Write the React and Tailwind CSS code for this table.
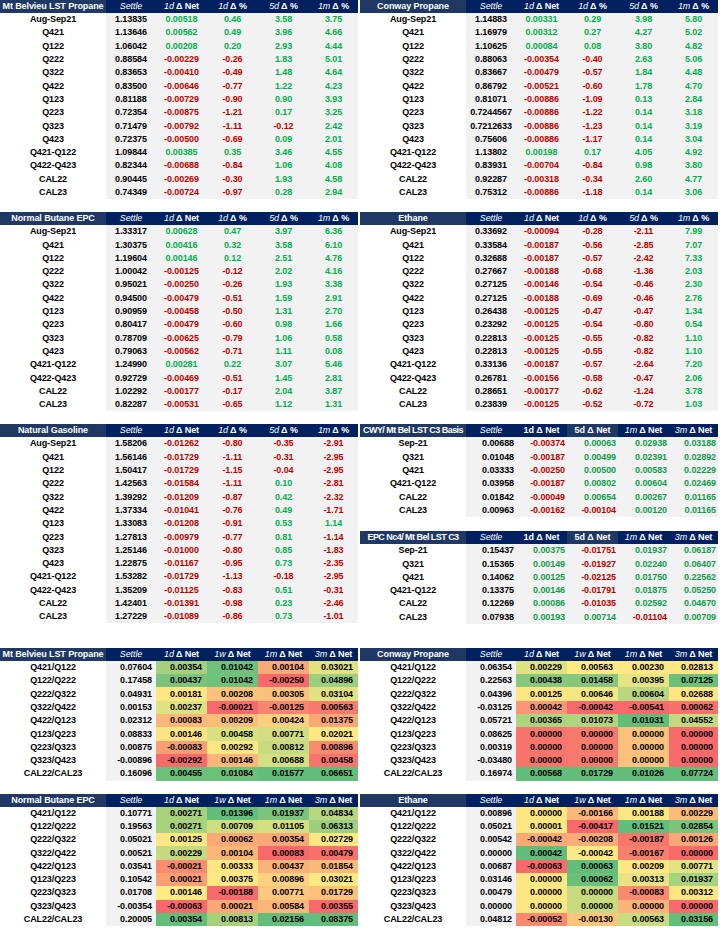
import React from "react";

const COLS = ["w-[106px]", "w-[50px]", "w-[51px]", "w-[51px]", "w-[51px]", "w-[49px]"];

const TOP_HEAD = [["Settle", ""], ["1d", " Δ Net"], ["1d", " Δ %"], ["5d", " Δ %"], ["1m", " Δ %"]];
const BASIS_HEAD = [["Settle", ""], ["", "1d Δ Net"], ["", "5d Δ Net"], ["1m", " Δ Net"], ["3m", " Δ Net"]];
const SPREAD_HEAD = [["Settle", ""], ["1d", " Δ Net"], ["1w", " Δ Net"], ["1m", " Δ Net"], ["3m", " Δ Net"]];

const r = (s) => s.split(" ");

const belvieu = [
  "Aug-Sep21 1.13835 0.00518 0.46 3.58 3.75",
  "Q421 1.13646 0.00562 0.49 3.96 4.66",
  "Q122 1.06042 0.00208 0.20 2.93 4.44",
  "Q222 0.88584 -0.00229 -0.26 1.83 5.01",
  "Q322 0.83653 -0.00410 -0.49 1.48 4.64",
  "Q422 0.83500 -0.00646 -0.77 1.22 4.23",
  "Q123 0.81188 -0.00729 -0.90 0.90 3.93",
  "Q223 0.72354 -0.00875 -1.21 0.17 3.25",
  "Q323 0.71479 -0.00792 -1.11 -0.12 2.42",
  "Q423 0.72375 -0.00500 -0.69 0.09 2.01",
  "Q421-Q122 1.09844 0.00385 0.35 3.46 4.55",
  "Q422-Q423 0.82344 -0.00688 -0.84 1.06 4.08",
  "CAL22 0.90445 -0.00269 -0.30 1.93 4.58",
  "CAL23 0.74349 -0.00724 -0.97 0.28 2.94",
].map(r);

const conway = [
  "Aug-Sep21 1.14883 0.00331 0.29 3.98 5.80",
  "Q421 1.16979 0.00312 0.27 4.27 5.02",
  "Q122 1.10625 0.00084 0.08 3.80 4.82",
  "Q222 0.88063 -0.00354 -0.40 2.63 5.06",
  "Q322 0.83667 -0.00479 -0.57 1.84 4.48",
  "Q422 0.86792 -0.00521 -0.60 1.78 4.70",
  "Q123 0.81071 -0.00886 -1.09 0.13 2.84",
  "Q223 0.7244567 -0.00886 -1.22 0.14 3.18",
  "Q323 0.7212633 -0.00886 -1.23 0.14 3.19",
  "Q423 0.75606 -0.00886 -1.17 0.14 3.04",
  "Q421-Q122 1.13802 0.00198 0.17 4.05 4.92",
  "Q422-Q423 0.83931 -0.00704 -0.84 0.98 3.80",
  "CAL22 0.92287 -0.00318 -0.34 2.60 4.77",
  "CAL23 0.75312 -0.00886 -1.18 0.14 3.06",
].map(r);

const butane = [
  "Aug-Sep21 1.33317 0.00628 0.47 3.97 6.36",
  "Q421 1.30375 0.00416 0.32 3.58 6.10",
  "Q122 1.19604 0.00146 0.12 2.51 4.76",
  "Q222 1.00042 -0.00125 -0.12 2.02 4.16",
  "Q322 0.95021 -0.00250 -0.26 1.93 3.38",
  "Q422 0.94500 -0.00479 -0.51 1.59 2.91",
  "Q123 0.90959 -0.00458 -0.50 1.31 2.70",
  "Q223 0.80417 -0.00479 -0.60 0.98 1.66",
  "Q323 0.78709 -0.00625 -0.79 1.06 0.58",
  "Q423 0.79063 -0.00562 -0.71 1.11 0.08",
  "Q421-Q122 1.24990 0.00281 0.22 3.07 5.46",
  "Q422-Q423 0.92729 -0.00469 -0.51 1.45 2.81",
  "CAL22 1.02292 -0.00177 -0.17 2.04 3.87",
  "CAL23 0.82287 -0.00531 -0.65 1.12 1.31",
].map(r);

const ethane = [
  "Aug-Sep21 0.33692 -0.00094 -0.28 -2.11 7.99",
  "Q421 0.33584 -0.00187 -0.56 -2.85 7.07",
  "Q122 0.32688 -0.00187 -0.57 -2.42 7.33",
  "Q222 0.27667 -0.00188 -0.68 -1.36 2.03",
  "Q322 0.27125 -0.00146 -0.54 -0.46 2.30",
  "Q422 0.27125 -0.00188 -0.69 -0.46 2.76",
  "Q123 0.26438 -0.00125 -0.47 -0.47 1.34",
  "Q223 0.23292 -0.00125 -0.54 -0.80 0.54",
  "Q323 0.22813 -0.00125 -0.55 -0.82 1.10",
  "Q423 0.22813 -0.00125 -0.55 -0.82 1.10",
  "Q421-Q122 0.33136 -0.00187 -0.57 -2.64 7.20",
  "Q422-Q423 0.26781 -0.00156 -0.58 -0.47 2.06",
  "CAL22 0.28651 -0.00177 -0.62 -1.24 3.78",
  "CAL23 0.23839 -0.00125 -0.52 -0.72 1.03",
].map(r);

const gasoline = [
  "Aug-Sep21 1.58206 -0.01262 -0.80 -0.35 -2.91",
  "Q421 1.56146 -0.01729 -1.11 -0.31 -2.95",
  "Q122 1.50417 -0.01729 -1.15 -0.04 -2.95",
  "Q222 1.42563 -0.01584 -1.11 0.10 -2.81",
  "Q322 1.39292 -0.01209 -0.87 0.42 -2.32",
  "Q422 1.37334 -0.01041 -0.76 0.49 -1.71",
  "Q123 1.33083 -0.01208 -0.91 0.53 1.14",
  "Q223 1.27813 -0.00979 -0.77 0.81 -1.14",
  "Q323 1.25146 -0.01000 -0.80 0.85 -1.83",
  "Q423 1.22875 -0.01167 -0.95 0.73 -2.35",
  "Q421-Q122 1.53282 -0.01729 -1.13 -0.18 -2.95",
  "Q422-Q423 1.35209 -0.01125 -0.83 0.51 -0.31",
  "CAL22 1.42401 -0.01391 -0.98 0.23 -2.46",
  "CAL23 1.27229 -0.01089 -0.86 0.73 -1.01",
].map(r);

const cwyBasis = [
  "Sep-21 0.00688 -0.00374 0.00063 0.02938 0.03188",
  "Q321 0.01048 -0.00187 0.00499 0.02391 0.02892",
  "Q421 0.03333 -0.00250 0.00500 0.00583 0.02229",
  "Q421-Q122 0.03958 -0.00187 0.00802 0.00604 0.02469",
  "CAL22 0.01842 -0.00049 0.00654 0.00267 0.01165",
  "CAL23 0.00963 -0.00162 -0.00104 0.00120 0.01165",
].map(r);

const epcBasis = [
  "Sep-21 0.15437 0.00375 -0.01751 0.01937 0.06187",
  "Q321 0.15365 0.00149 -0.01927 0.02240 0.06407",
  "Q421 0.14062 0.00125 -0.02125 0.01750 0.22562",
  "Q421-Q122 0.13375 0.00146 -0.01791 0.01875 0.05250",
  "CAL22 0.12269 0.00086 -0.01035 0.02592 0.04670",
  "CAL23 0.07938 0.00193 0.00714 -0.01104 0.00709",
].map(r);

// spread rows: label, settle, then [value, bg class] x4
const belvieuSpread = [
  ["Q421/Q122", "0.07604", ["0.00354", "bg-[#a5d17f]"], ["0.01042", "bg-[#6fc17c]"], ["0.00104", "bg-[#fbaa77]"], ["0.03021", "bg-[#e2e283]"]],
  ["Q122/Q222", "0.17458", ["0.00437", "bg-[#7cc47d]"], ["0.01042", "bg-[#6fc17c]"], ["-0.00250", "bg-[#f8696b]"], ["0.04896", "bg-[#9ecf7f]"]],
  ["Q222/Q322", "0.04931", ["0.00181", "bg-[#fee683]"], ["0.00208", "bg-[#fcc27c]"], ["0.00305", "bg-[#fcc17c]"], ["0.03104", "bg-[#e0e283]"]],
  ["Q322/Q422", "0.00153", ["0.00237", "bg-[#dce182]"], ["-0.00021", "bg-[#f8696b]"], ["-0.00125", "bg-[#f98570]"], ["0.00563", "bg-[#f87a6e]"]],
  ["Q422/Q123", "0.02312", ["0.00083", "bg-[#fbb779]"], ["0.00209", "bg-[#fcbf7b]"], ["0.00424", "bg-[#fdcf7e]"], ["0.01375", "bg-[#fba877]"]],
  ["Q123/Q223", "0.08833", ["0.00146", "bg-[#fee382]"], ["0.00458", "bg-[#d9e082]"], ["0.00771", "bg-[#d2de81]"], ["0.02021", "bg-[#fee883]"]],
  ["Q223/Q323", "0.00875", ["-0.00083", "bg-[#f99d74]"], ["0.00292", "bg-[#fee783]"], ["0.00812", "bg-[#c9db80]"], ["0.00896", "bg-[#f98a70]"]],
  ["Q323/Q423", "-0.00896", ["-0.00292", "bg-[#f8696b]"], ["0.00146", "bg-[#fcb679]"], ["0.00688", "bg-[#d4df81]"], ["0.00458", "bg-[#f8756d]"]],
  ["CAL22/CAL23", "0.16096", ["0.00455", "bg-[#6bc07b]"], ["0.01084", "bg-[#6bc07b]"], ["0.01577", "bg-[#63be7b]"], ["0.06651", "bg-[#63be7b]"]],
];

const conwaySpread = [
  ["Q421/Q122", "0.06354", ["0.00229", "bg-[#dfe283]"], ["0.00563", "bg-[#ffea84]"], ["0.00230", "bg-[#fee883]"], ["0.02813", "bg-[#fee783]"]],
  ["Q122/Q222", "0.22563", ["0.00438", "bg-[#8ac77e]"], ["0.01458", "bg-[#87c67e]"], ["0.00395", "bg-[#e5e383]"], ["0.07125", "bg-[#6bc07b]"]],
  ["Q222/Q322", "0.04396", ["0.00125", "bg-[#fee783]"], ["0.00646", "bg-[#f1e783]"], ["0.00604", "bg-[#b9d780]"], ["0.02688", "bg-[#fee582]"]],
  ["Q322/Q422", "-0.03125", ["0.00042", "bg-[#f99677]"], ["-0.00042", "bg-[#f8696b]"], ["-0.00541", "bg-[#f8696b]"], ["0.00062", "bg-[#f8716c]"]],
  ["Q422/Q123", "0.05721", ["0.00365", "bg-[#add380]"], ["0.01073", "bg-[#b0d480]"], ["0.01031", "bg-[#63be7b]"], ["0.04552", "bg-[#c5da80]"]],
  ["Q123/Q223", "0.08625", ["0.00000", "bg-[#f8756d]"], ["0.00000", "bg-[#f87a6e]"], ["0.00000", "bg-[#fcc27c]"], ["0.00000", "bg-[#f8696b]"]],
  ["Q223/Q323", "0.00319", ["0.00000", "bg-[#f8756d]"], ["0.00000", "bg-[#f87a6e]"], ["0.00000", "bg-[#fcc27c]"], ["0.00000", "bg-[#f8696b]"]],
  ["Q323/Q423", "-0.03480", ["0.00000", "bg-[#f8756d]"], ["0.00000", "bg-[#f87a6e]"], ["0.00000", "bg-[#fcc27c]"], ["0.00000", "bg-[#f8696b]"]],
  ["CAL22/CAL23", "0.16974", ["0.00568", "bg-[#63be7b]"], ["0.01729", "bg-[#63be7b]"], ["0.01026", "bg-[#63be7b]"], ["0.07724", "bg-[#63be7b]"]],
];

const butaneSpread = [
  ["Q421/Q122", "0.10771", ["0.00271", "bg-[#a9d27f]"], ["0.01396", "bg-[#63be7b]"], ["0.01937", "bg-[#7cc47d]"], ["0.04834", "bg-[#b9d780]"]],
  ["Q122/Q222", "0.19563", ["0.00271", "bg-[#a9d27f]"], ["0.00709", "bg-[#cfdd82]"], ["0.01105", "bg-[#d4df82]"], ["0.06313", "bg-[#9ecf7f]"]],
  ["Q222/Q322", "0.05021", ["0.00125", "bg-[#fee683]"], ["0.00062", "bg-[#fbaa77]"], ["0.00354", "bg-[#fba777]"], ["0.02729", "bg-[#fee883]"]],
  ["Q322/Q422", "0.00521", ["0.00229", "bg-[#c5da80]"], ["0.00104", "bg-[#fbb579]"], ["0.00083", "bg-[#f8696b]"], ["0.00479", "bg-[#f8716c]"]],
  ["Q422/Q123", "0.03541", ["-0.00021", "bg-[#f98b70]"], ["0.00333", "bg-[#fee683]"], ["0.00437", "bg-[#fbb279]"], ["0.01854", "bg-[#fcba7a]"]],
  ["Q123/Q223", "0.10542", ["0.00021", "bg-[#fa9e74]"], ["0.00375", "bg-[#fee883]"], ["0.00896", "bg-[#fdd17f]"], ["0.03021", "bg-[#fde983]"]],
  ["Q223/Q323", "0.01708", ["0.00146", "bg-[#ffeb84]"], ["-0.00188", "bg-[#f8696b]"], ["0.00771", "bg-[#fdc77d]"], ["0.01729", "bg-[#fcc27c]"]],
  ["Q323/Q423", "-0.00354", ["-0.00063", "bg-[#f8696b]"], ["0.00021", "bg-[#fba777]"], ["0.00584", "bg-[#fcb67a]"], ["0.00355", "bg-[#f8696b]"]],
  ["CAL22/CAL23", "0.20005", ["0.00354", "bg-[#63be7b]"], ["0.00813", "bg-[#a5d17f]"], ["0.02156", "bg-[#63be7b]"], ["0.08375", "bg-[#63be7b]"]],
];

const ethaneSpread = [
  ["Q421/Q122", "0.00896", ["0.00000", "bg-[#fee683]"], ["-0.00166", "bg-[#fcb87a]"], ["0.00188", "bg-[#fee683]"], ["0.00229", "bg-[#fcbb7a]"]],
  ["Q122/Q222", "0.05021", ["0.00001", "bg-[#fee683]"], ["-0.00417", "bg-[#f8696b]"], ["0.01521", "bg-[#63be7b]"], ["0.02854", "bg-[#7cc47d]"]],
  ["Q222/Q322", "0.00542", ["-0.00042", "bg-[#fbaa77]"], ["-0.00208", "bg-[#fbad78]"], ["-0.00187", "bg-[#f8776d]"], ["0.00126", "bg-[#fba777]"]],
  ["Q322/Q422", "0.00000", ["0.00042", "bg-[#63be7b]"], ["-0.00042", "bg-[#fee883]"], ["-0.00167", "bg-[#f87e6e]"], ["0.00000", "bg-[#f8696b]"]],
  ["Q422/Q123", "0.00687", ["-0.00063", "bg-[#f8696b]"], ["0.00063", "bg-[#63be7b]"], ["0.00209", "bg-[#fee683]"], ["0.00771", "bg-[#e2e383]"]],
  ["Q123/Q223", "0.03146", ["0.00000", "bg-[#fee683]"], ["0.00062", "bg-[#6bc07b]"], ["0.00313", "bg-[#e8e483]"], ["0.01937", "bg-[#a9d27f]"]],
  ["Q223/Q323", "0.00479", ["0.00000", "bg-[#fee683]"], ["0.00000", "bg-[#c9db80]"], ["-0.00083", "bg-[#f98a70]"], ["0.00312", "bg-[#fee683]"]],
  ["Q323/Q423", "0.00000", ["0.00000", "bg-[#fee683]"], ["0.00000", "bg-[#c9db80]"], ["0.00000", "bg-[#fcb27a]"], ["0.00000", "bg-[#f8696b]"]],
  ["CAL22/CAL23", "0.04812", ["-0.00052", "bg-[#f98a70]"], ["-0.00130", "bg-[#fcc47c]"], ["0.00563", "bg-[#c9db80]"], ["0.03156", "bg-[#63be7b]"]],
];

const Header = ({ title, heads, light = [], tight = false }) => (
  <div className="flex h-[13px] text-white leading-none">
    <div className={`${COLS[0]} bg-[#1f3864] flex items-center justify-center whitespace-nowrap`}>
      <span className={tight ? "tracking-[-0.06em]" : ""}>{title}</span>
    </div>
    {heads.map(([it, rest], i) => (
      <div
        key={i}
        className={`${COLS[i + 1]} ${light.includes(i) ? "bg-[#1f3864]" : "bg-[#002060]"} flex items-center justify-center whitespace-nowrap`}
      >
        {it && <span className="italic font-normal">{it}</span>}
        {rest && <span className="whitespace-pre">{rest}</span>}
      </div>
    ))}
  </div>
);

const signColor = (v, green) => (v.startsWith("-") ? "text-[#c00000]" : green);

const PriceTable = ({ title, rows }) => (
  <div className="w-[358px]">
    <Header title={title} heads={TOP_HEAD} />
    {rows.map((row) => (
      <div key={row[0]} className="flex h-[13.3px] leading-none items-stretch">
        <div className={`${COLS[0]} flex items-center justify-center text-black`}>{row[0]}</div>
        <div className={`${COLS[1]} bg-[#f2f2f2] flex items-center justify-center text-black`}>{row[1]}</div>
        {row.slice(2).map((v, i) => (
          <div
            key={i}
            className={`${COLS[i + 2]} bg-[#f2f2f2] flex items-center justify-center ${signColor(v, "text-[#00b050]")}`}
          >
            {v}
          </div>
        ))}
      </div>
    ))}
  </div>
);

const BasisTable = ({ title, rows }) => (
  <div className="w-[358px]">
    <Header title={title} heads={BASIS_HEAD} light={[2]} tight />
    {rows.map((row) => (
      <div key={row[0]} className="flex h-[13.3px] leading-none">
        <div className={`${COLS[0]} flex items-center justify-center text-black`}>{row[0]}</div>
        <div className={`${COLS[1]} bg-[#f2f2f2] flex items-center justify-end pr-[2px] text-black`}>{row[1]}</div>
        {row.slice(2).map((v, i) => (
          <div
            key={i}
            className={`${COLS[i + 2]} bg-[#f2f2f2] flex items-center justify-end pr-[2px] ${signColor(v, "text-[#119c50]")}`}
          >
            {v}
          </div>
        ))}
      </div>
    ))}
  </div>
);

const SpreadTable = ({ title, rows }) => (
  <div className="w-[358px]">
    <Header title={title} heads={SPREAD_HEAD} />
    {rows.map(([label, settle, ...cells]) => (
      <div key={label} className="flex h-[13.3px] leading-none text-black">
        <div className={`${COLS[0]} flex items-center justify-center`}>{label}</div>
        <div className={`${COLS[1]} bg-[#f2f2f2] flex items-center justify-end pr-[4px]`}>{settle}</div>
        {cells.map(([v, bg], i) => (
          <div key={i} className={`${COLS[i + 2]} ${bg} flex items-center justify-end pr-[5px]`}>
            {v}
          </div>
        ))}
      </div>
    ))}
  </div>
);

export default function App() {
  return (
    <div className="w-[720px] h-[928px] bg-white overflow-hidden font-['Liberation_Sans',Arial,sans-serif] text-[9px] font-bold tracking-[-0.01em]">
      <div className="flex gap-[2px]">
        <PriceTable title="Mt Belvieu LST Propane" rows={belvieu} />
        <PriceTable title="Conway Propane" rows={conway} />
      </div>

      <div className="flex gap-[2px] mt-[13px]">
        <PriceTable title="Normal Butane EPC" rows={butane} />
        <PriceTable title="Ethane" rows={ethane} />
      </div>

      <div className="flex gap-[2px] mt-[13px] items-start">
        <PriceTable title="Natural Gasoline" rows={gasoline} />
        <div className="flex flex-col gap-[14px]">
          <BasisTable title="CWY/ Mt Bel LST C3 Basis" rows={cwyBasis} />
          <BasisTable title="EPC Nc4/ Mt Bel LST C3" rows={epcBasis} />
        </div>
      </div>

      <div className="flex gap-[2px] mt-[24px]">
        <SpreadTable title="Mt Belvieu LST Propane" rows={belvieuSpread} />
        <SpreadTable title="Conway Propane" rows={conwaySpread} />
      </div>

      <div className="flex gap-[2px] mt-[13px]">
        <SpreadTable title="Normal Butane EPC" rows={butaneSpread} />
        <SpreadTable title="Ethane" rows={ethaneSpread} />
      </div>
    </div>
  );
}
